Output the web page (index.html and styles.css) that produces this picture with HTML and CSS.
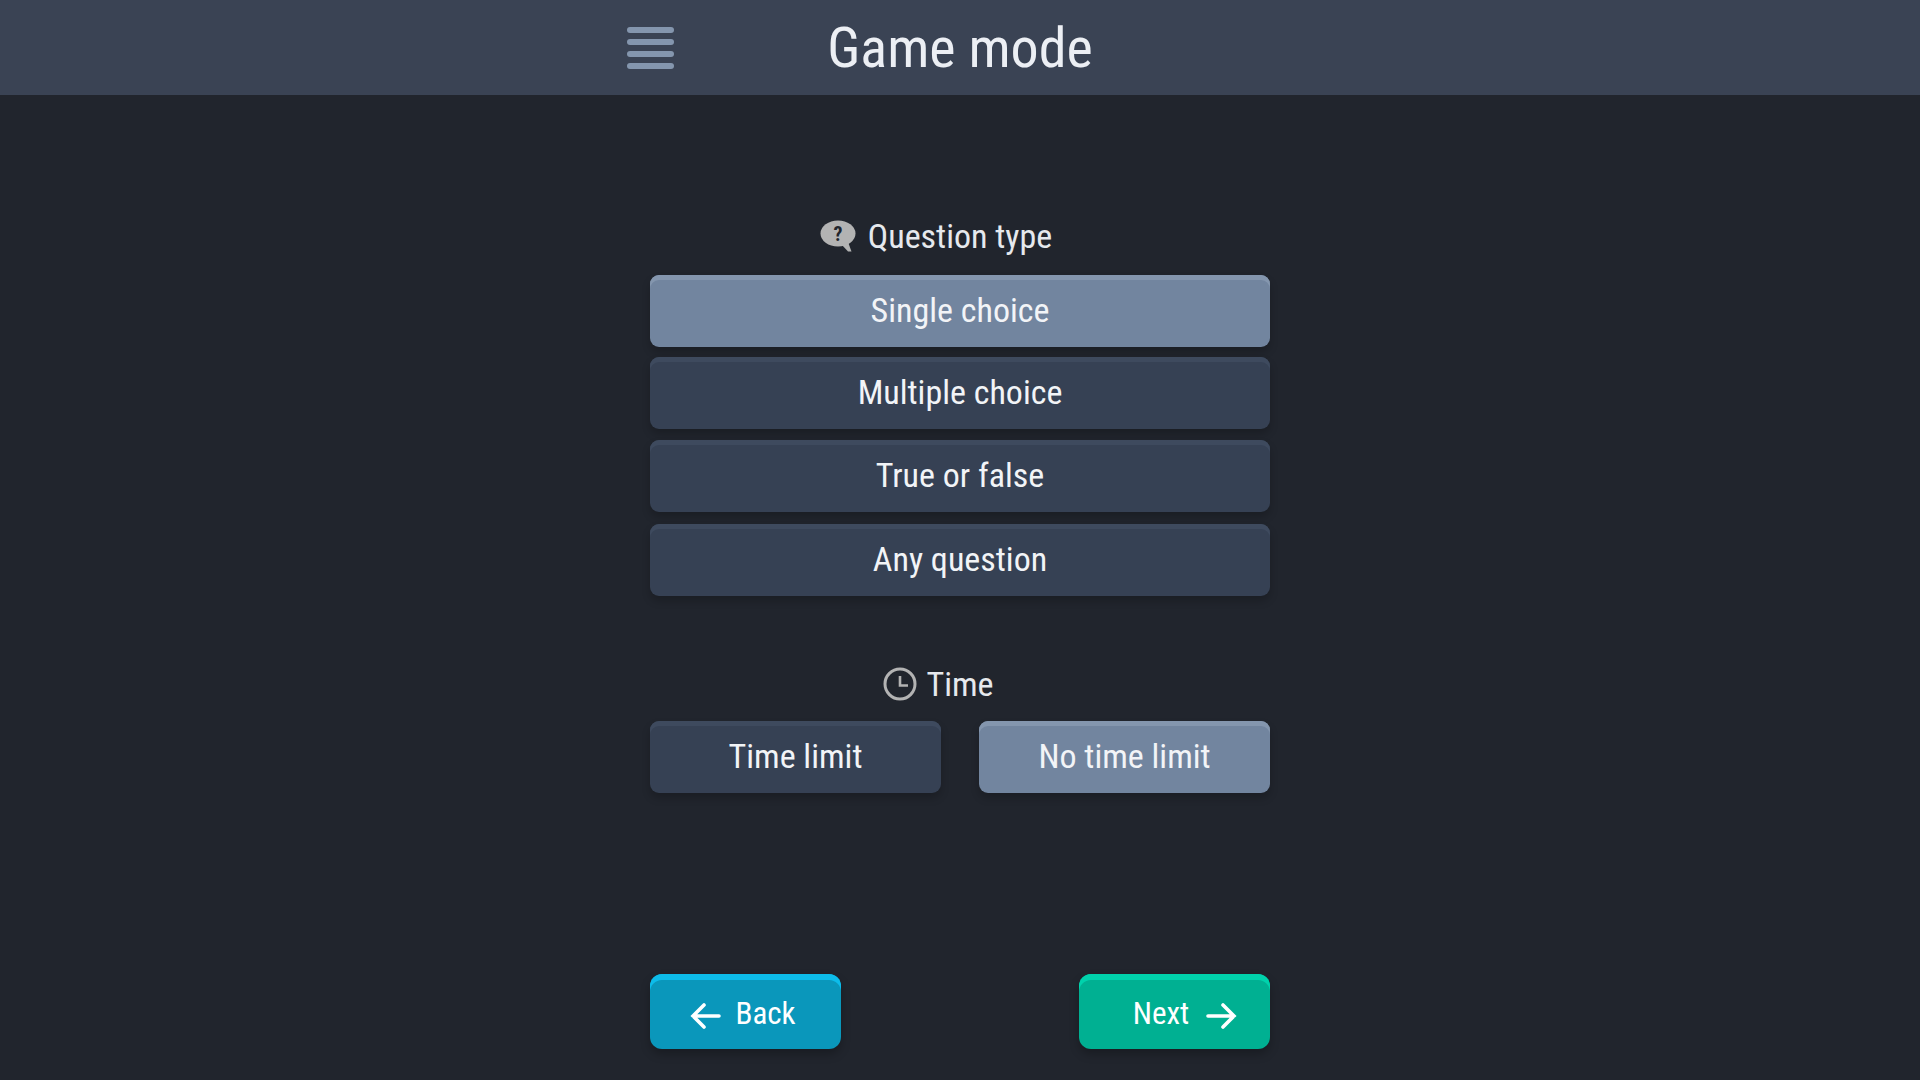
FILE: index.html
```html
<!DOCTYPE html>
<html lang="en">

<head>
  <meta charset="UTF-8">
  <title>Game mode</title>
  <link rel="stylesheet" href="styles.css">
</head>

<body>
  <header class="topbar">
    <div class="topbar-inner">
      <div class="menu-icon">
        <span></span>
        <span></span>
        <span></span>
        <span></span>
      </div>
      <h1>Game mode</h1>
    </div>
  </header>

  <main class="content">
    <div class="section-label">
      <span class="label-text">
        <svg class="label-icon" viewBox="0 0 36 32" width="36" height="32">
          <ellipse cx="18" cy="13.500" rx="17.500" ry="13" fill="#b3b3b3" />
          <path d="M21 24l7 7.500h3.500L28 22z" fill="#b3b3b3" />
          <text x="18" y="20.500" class="label-mark">?</text>
        </svg>
        Question type
      </span>
    </div>
    <div class="option-list">
      <button class="option selected">Single choice</button>
      <button class="option">Multiple choice</button>
      <button class="option">True or false</button>
      <button class="option">Any question</button>
    </div>

    <div class="section-label time-label">
      <span class="label-text">
        <svg class="label-icon clock" viewBox="0 0 34 34" width="34" height="34">
          <circle cx="17" cy="17" r="15" fill="none" stroke="#b3b3b3" stroke-width="3" />
          <path d="M17 9v9.500h8" fill="none" stroke="#b3b3b3" stroke-width="2.600" />
        </svg>
        Time
      </span>
    </div>
    <div class="option-row">
      <button class="option">Time limit</button>
      <button class="option selected">No time limit</button>
    </div>

    <div class="nav-row">
      <button class="nav-btn back">
        <svg viewBox="0 0 32 28" width="32" height="28">
          <path d="M29 14H3M14 3 3 14l11 11" fill="none" stroke="#fff" stroke-width="3.600" stroke-linecap="round" />
        </svg>
        <span>Back</span>
      </button>
      <button class="nav-btn next">
        <span>Next</span>
        <svg viewBox="0 0 32 28" width="32" height="28">
          <path d="M3 14h26M18 3l11 11-11 11" fill="none" stroke="#fff" stroke-width="3.600" stroke-linecap="round" />
        </svg>
      </button>
    </div>
  </main>
</body>

</html>
```

FILE: styles.css
```css
* {
  box-sizing: border-box;
}

body {
  margin: 0;
  height: 1080px;
  overflow: hidden;
  background: #21252d;
  color: #e6e9ed;
  font-family: 'Roboto', sans-serif;
  font-stretch: 75%;
}

.topbar {
  height: 95px;
  background: #3a4354;
  display: flex;
  justify-content: center;
}

.topbar-inner {
  width: 666px;
  display: grid;
  grid-template-columns: 1fr auto 1fr;
  align-items: center;
}

.topbar h1 {
  margin: 0;
  grid-column: 2;
  grid-row: 1;
  font-size: 56px;
  font-weight: 400;
  color: #eceff4;
}

.menu-icon {
  grid-column: 1;
  grid-row: 1;
  display: flex;
  flex-direction: column;
  gap: 6px;
  width: 47px;
}

.menu-icon span {
  height: 6px;
  border-radius: 3px;
  background: #8496ae;
}

.content {
  width: 620px;
  margin: 0 auto;
  padding-top: 118px;
}

.section-label {
  height: 46px;
  display: flex;
  justify-content: center;
  align-items: center;
  font-size: 34px;
  margin-bottom: 16px;
}

.time-label {
  margin-top: 65px;
  margin-bottom: 14px;
}

/* the text is what sits centred, the icon hangs off its left side */
.label-text {
  position: relative;
}

.label-icon {
  position: absolute;
  right: 100%;
  top: 50%;
  margin-right: 12px;
  transform: translateY(-50%);
}

.label-icon.clock {
  margin-right: 9px;
}

.label-mark {
  font-family: 'Roboto', sans-serif;
  font-size: 20px;
  font-weight: 700;
  fill: #21252d;
  text-anchor: middle;
}

.option-list {
  display: flex;
  flex-direction: column;
  gap: 10px;
}

.option-list .option:nth-child(3) {
  margin-top: 1px;
}

.option-list .option:nth-child(4) {
  margin-top: 2px;
}

.option-row {
  display: grid;
  grid-template-columns: 291px 291px;
  justify-content: space-between;
}

.option {
  height: 72px;
  padding: 0 0 2px;
  border: none;
  border-radius: 9px;
  background: #364154;
  color: #f2f4f7;
  font-family: inherit;
  font-stretch: inherit;
  font-size: 34px;
  box-shadow: inset 0 5px 0 #3e4a5e, 0 5px 8px rgba(0, 0, 0, .2);
}

.option.selected {
  background: #72859f;
  box-shadow: inset 0 5px 0 #8496ae, 0 5px 8px rgba(0, 0, 0, .2);
}

.nav-row {
  margin-top: 181px;
  display: flex;
  justify-content: space-between;
}

.nav-btn {
  width: 191px;
  height: 75px;
  padding: 4px 0 0;
  border: none;
  border-radius: 12px;
  color: #fff;
  display: flex;
  justify-content: center;
  align-items: center;
  gap: 13px;
  font-family: inherit;
  font-stretch: inherit;
  font-size: 31px;
}

.nav-btn svg {
  margin-top: 4px;
}

.nav-btn.back {
  padding-right: 5px;
  background: #0a97bb;
  box-shadow: inset 0 6px 0 #0dbcea, 0 5px 10px rgba(0, 0, 0, .25);
}

.nav-btn.next {
  padding-left: 21px;
  gap: 16px;
  background: #00b092;
  box-shadow: inset 0 6px 0 #00d2ac, 0 5px 10px rgba(0, 0, 0, .25);
}
```
